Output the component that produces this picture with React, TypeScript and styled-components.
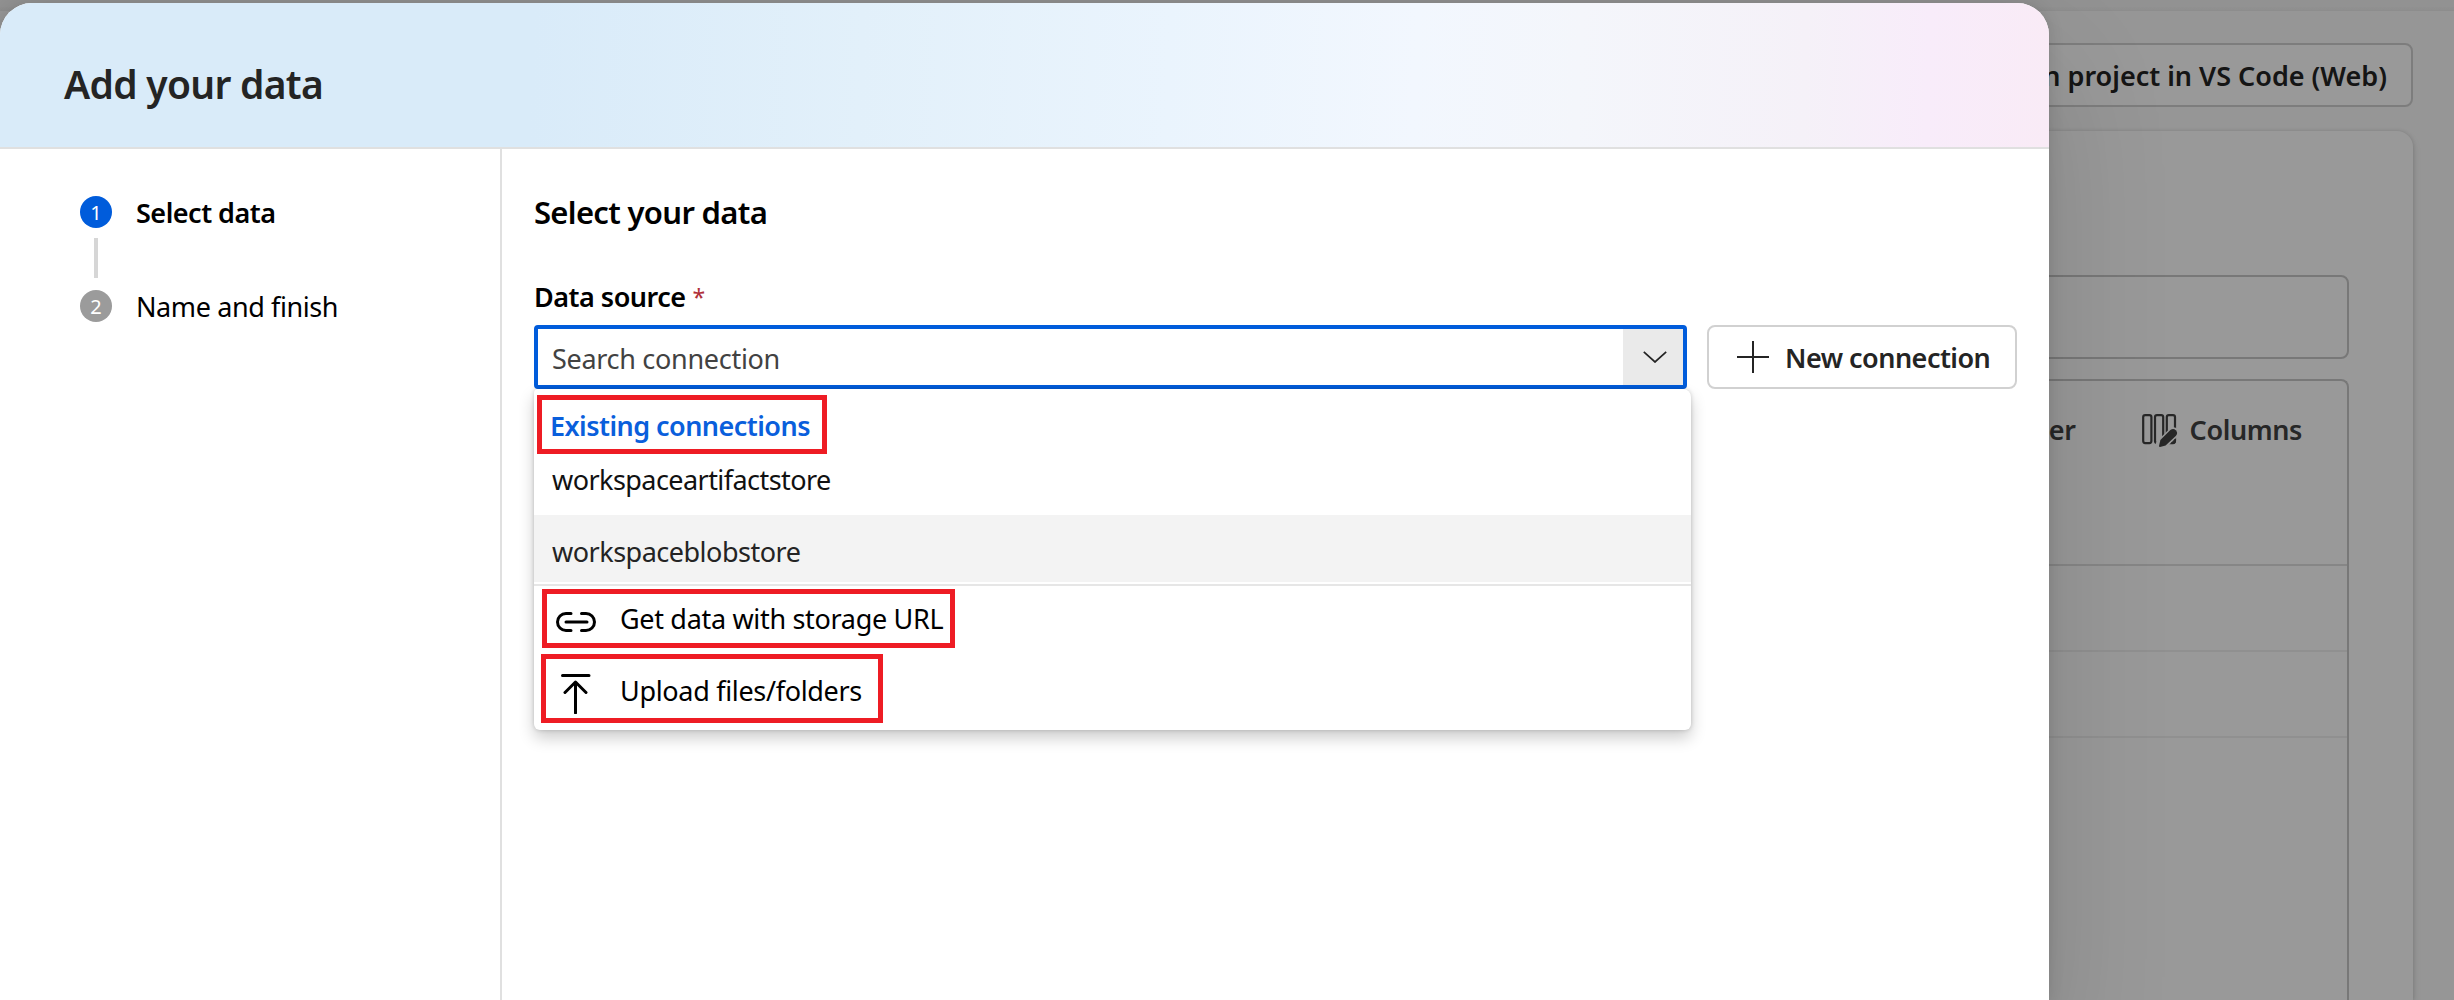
import React from 'react';
import styled, { createGlobalStyle } from 'styled-components';

const GlobalStyle = createGlobalStyle`
  *, *::before, *::after { box-sizing: border-box; }
  body {
    margin: 0;
    background: #fafafa;
    color: #000;
    font-family: "Noto Sans", "Open Sans", sans-serif;
    font-size: 27px;
  }
`;

const Screen = styled.div`
  position: relative;
  width: 2454px;
  height: 1000px;
  overflow: hidden;
`;

const Label = styled.span<{ $spacing?: number; $strong?: boolean }>`
  padding-top: 2px;
  white-space: nowrap;
  line-height: 40px;
  letter-spacing: ${(p) => p.$spacing ?? 0}px;
  font-weight: ${(p) => (p.$strong ? 600 : 400)};
`;

/* ---------- Page behind the dialog ---------- */

const Page = styled.div`
  display: flex;
  flex-direction: column;
  height: 1000px;
  background: #fafafa;
`;

const TopBar = styled.div`
  flex: none;
  height: 11px;
  background: linear-gradient(#f3f3f3 60%, #ebebeb);
`;

const PageBody = styled.div`
  flex: 1;
  display: flex;
  flex-direction: column;
  gap: 24px;
  padding: 32px 41px 0 300px;
`;

const PageActions = styled.div`
  display: flex;
  justify-content: flex-end;
`;

const OutlineButton = styled.button`
  display: flex;
  align-items: center;
  height: 64px;
  padding: 0 24px 0 26px;
  border: 2px solid #d1d1d1;
  border-radius: 8px;
  background: #fff;
  color: #242424;
  font: inherit;
`;

const PageCard = styled.div`
  flex: 1;
  display: flex;
  flex-direction: column;
  gap: 20px;
  padding: 144px 64px 0;
  border-radius: 16px 16px 0 0;
  background: #fff;
  box-shadow: 0 0 4px rgba(0, 0, 0, 0.12), 0 4px 8px rgba(0, 0, 0, 0.14);
`;

const FilterBox = styled.div`
  flex: none;
  height: 84px;
  border: 2px solid #c8c8c8;
  border-radius: 8px;
`;

const Table = styled.div`
  flex: 1;
  border: 2px solid #c8c8c8;
  border-bottom: 0;
  border-radius: 8px 8px 0 0;
`;

const TableTools = styled.div`
  display: flex;
  align-items: center;
  justify-content: flex-end;
  gap: 66px;
  height: 97px;
  padding-right: 45px;
  color: #424242;
`;

const Tool = styled.div`
  display: flex;
  align-items: center;
  gap: 12px;

  svg { margin-top: 3px; }
  ${Label} { padding-top: 1px; }
`;

const TableRow = styled.div<{ $head?: boolean }>`
  height: ${(p) => (p.$head ? 88 : 86)}px;
  border-bottom: 2px solid ${(p) => (p.$head ? '#e0e0e0' : '#f0f0f0')};
`;

const Overlay = styled.div`
  position: absolute;
  inset: 0;
  background: rgba(0, 0, 0, 0.4);
`;

/* ---------- Dialog ---------- */

const Dialog = styled.section`
  position: absolute;
  top: 3px;
  left: 0;
  width: 2049px;
  height: 1000px;
  display: flex;
  flex-direction: column;
  border-radius: 32px 32px 0 0;
  background: #fff;
  box-shadow: 0 0 16px rgba(0, 0, 0, 0.12), 0 64px 128px rgba(0, 0, 0, 0.14);
`;

const DialogHeader = styled.header`
  flex: none;
  display: flex;
  height: 146px;
  padding: 51px 0 0 64px;
  border-bottom: 2px solid #e0e0e0;
  border-radius: 32px 32px 0 0;
  background: linear-gradient(
    92deg,
    #d9ebf9 0%,
    #d9ebf9 26%,
    #e2f0fa 42%,
    #eaf4fd 57%,
    #f2f7fe 69%,
    #f4f6fb 77%,
    #f5f1f8 88%,
    #f8ecfa 94%,
    #f9ebf6 100%
  );
`;

const DialogTitle = styled.h1`
  margin: 0;
  color: #242424;
  font-size: 39px;
  font-weight: 600;
  line-height: 60px;
  letter-spacing: -0.72px;
`;

const DialogBody = styled.div`
  flex: 1;
  display: flex;
`;

const Steps = styled.nav`
  width: 502px;
  padding: 47px 0 0 80px;
  border-right: 2px solid #e0e0e0;
`;

const Step = styled.div`
  display: flex;
  align-items: center;
  gap: 24px;
  height: 32px;
`;

const StepNumber = styled.span<{ $active?: boolean }>`
  width: 32px;
  height: 32px;
  border-radius: 50%;
  background: ${(p) => (p.$active ? '#005cdb' : '#9b9b9b')};
  color: #fff;
  font-size: 20px;
  line-height: 33px;
  text-align: center;
`;

const StepLine = styled.div`
  width: 4px;
  height: 40px;
  margin: 10px 0 12px 14px;
  background: #d6d6d6;
`;

const Main = styled.main`
  flex: 1;
  padding: 41px 32px 0;
`;

const SectionTitle = styled.h2`
  margin: 0;
  font-size: 31px;
  font-weight: 600;
  line-height: 44px;
  letter-spacing: -0.68px;
`;

const FieldLabel = styled.div`
  display: flex;
  gap: 7px;
  height: 40px;
  margin: 41px 0 10px;
`;

const Required = styled.span`
  padding-top: 2px;
  color: #b0303a;
  font-size: 23px;
  line-height: 40px;
`;

const FieldRow = styled.div`
  display: flex;
  gap: 20px;
`;

const Combo = styled.div`
  position: relative;
  width: 1153px;
  height: 64px;
`;

const ComboField = styled.div`
  display: flex;
  justify-content: space-between;
  height: 64px;
  padding-left: 14px;
  border: 4px solid #005cdb;
  border-radius: 4px;
  background: #fff;
  color: #424242;

  ${Label} { line-height: 56px; }
`;

const ComboToggle = styled.div`
  display: flex;
  align-items: center;
  justify-content: center;
  width: 60px;
  padding-left: 3px;
  background: #eaeaea;
`;

const Menu = styled.div`
  position: absolute;
  top: 64px;
  left: 0;
  width: 1157px;
  height: 341px;
  padding-top: 6px;
  border-radius: 4px 8px 6px 6px;
  background: #fff;
  box-shadow: 0 0 4px rgba(0, 0, 0, 0.18), 0 8px 16px rgba(0, 0, 0, 0.2);
`;

const Marked = styled.div<{ $width: number; $height: number; $gap?: number; $left: number; $pad: number }>`
  display: flex;
  align-items: center;
  width: ${(p) => p.$width}px;
  height: ${(p) => p.$height}px;
  margin: ${(p) => p.$gap ?? 0}px 0 0 ${(p) => p.$left}px;
  padding-left: ${(p) => p.$pad}px;
  border: 5px solid #ee1c24;
`;

const GroupLabel = styled(Label)`
  color: #0a5fdc;
`;

const ActionLabel = styled(Label)<{ $drop?: number }>`
  padding-top: 1px;
  margin-top: ${(p) => p.$drop ?? 0}px;
`;

const Option = styled.div<{ $hover?: boolean }>`
  height: ${(p) => (p.$hover ? 67 : 61)}px;
  padding: ${(p) => (p.$hover ? 15 : 4)}px 0 0 18px;
  background: ${(p) => (p.$hover ? '#f3f3f3' : 'transparent')};
  color: ${(p) => (p.$hover ? '#242424' : '#111')};

  ${Label} { display: block; }
`;

const Divider = styled.div`
  height: 2px;
  margin-top: 2px;
  background: #e6e6e6;
`;

const ActionIcon = styled.svg<{ $drop: number }>`
  flex: none;
  margin: ${(p) => p.$drop}px 24px 0 0;
  fill: none;
  stroke: #000;
  stroke-width: 3;
  stroke-linecap: round;
  stroke-linejoin: round;
`;

const NewConnection = styled(OutlineButton)`
  width: 310px;
  gap: 16px;
  padding: 0 0 0 28px;
`;

const ColumnsIcon = () => (
  <svg width="36" height="34" viewBox="0 0 36 34" fill="none" stroke="#424242" strokeWidth="2.2">
    <rect x="1.2" y="1.1" width="8.2" height="28" rx="2" />
    <rect x="13" y="1.1" width="8.2" height="28" rx="2" />
    <rect x="24.8" y="1.1" width="8.2" height="28" rx="2" />
    <path d="M19 31 31.5 18.8" stroke="#fff" strokeWidth="11" strokeLinecap="round" />
    <path
      d="M17 32 18.4 26 28.4 16Q31.2 13.8 33.8 16.2 36.4 19 34 21.8L23.6 31.4 18 33Q17 33 17 32Z"
      fill="#424242"
      stroke="none"
    />
    <path d="M29 29.4 33.4 25v2.4q0 2-2 2Z" fill="#424242" strokeWidth="1" />
  </svg>
);

export default function App() {
  return (
    <Screen>
      <GlobalStyle />
      <Page>
        <TopBar />
        <PageBody>
          <PageActions>
            <OutlineButton>
              <Label $strong>Open project in VS Code (Web)</Label>
            </OutlineButton>
          </PageActions>
          <PageCard>
            <FilterBox />
            <Table>
              <TableTools>
                <Tool>
                  <Label $strong $spacing={-0.4}>Filter</Label>
                </Tool>
                <Tool>
                  <ColumnsIcon />
                  <Label $strong $spacing={-0.4}>Columns</Label>
                </Tool>
              </TableTools>
              <TableRow $head />
              <TableRow />
              <TableRow />
            </Table>
          </PageCard>
        </PageBody>
      </Page>
      <Overlay />

      <Dialog>
        <DialogHeader>
          <DialogTitle>Add your data</DialogTitle>
        </DialogHeader>
        <DialogBody>
          <Steps>
            <Step>
              <StepNumber $active>1</StepNumber>
              <Label $strong $spacing={-0.5}>Select data</Label>
            </Step>
            <StepLine />
            <Step>
              <StepNumber>2</StepNumber>
              <Label $spacing={-0.4}>Name and finish</Label>
            </Step>
          </Steps>
          <Main>
            <SectionTitle>Select your data</SectionTitle>
            <FieldLabel>
              <Label $strong $spacing={-0.5}>Data source</Label>
              <Required>*</Required>
            </FieldLabel>
            <FieldRow>
              <Combo>
                <ComboField>
                  <Label $spacing={-0.3}>Search connection</Label>
                  <ComboToggle>
                    <svg width="24" height="12" viewBox="0 0 24 12" fill="none" stroke="#242424" strokeWidth="1.7">
                      <path d="M.8.8 12 11 23.2.8" />
                    </svg>
                  </ComboToggle>
                </ComboField>
                <Menu>
                  <Marked $width={290} $height={59} $left={3} $pad={8}>
                    <GroupLabel $strong $spacing={-0.54}>Existing connections</GroupLabel>
                  </Marked>
                  <Option>
                    <Label $spacing={-0.56}>workspaceartifactstore</Label>
                  </Option>
                  <Option $hover>
                    <Label $spacing={-0.5}>workspaceblobstore</Label>
                  </Option>
                  <Divider />
                  <Marked $width={413} $height={59} $gap={3} $left={8} $pad={9}>
                    <ActionIcon $drop={7} width="40" height="20" viewBox="0 0 40 20">
                      <path d="M15 1.5h-5a8.5 8.5 0 0 0 0 17h5M25.5 1.5H30a8.5 8.5 0 0 1 0 17h-4.5M10 10h21" />
                    </ActionIcon>
                    <ActionLabel $spacing={-0.32}>Get data with storage URL</ActionLabel>
                  </Marked>
                  <Marked $width={342} $height={69} $gap={6} $left={7} $pad={10}>
                    <ActionIcon $drop={11} width="40" height="40" viewBox="0 0 40 40">
                      <path d="M6.5 1.5h26.5M19.5 8v31M9 18.5 19.5 8 30 18.5" />
                    </ActionIcon>
                    <ActionLabel $drop={4} $spacing={-0.32}>Upload files/folders</ActionLabel>
                  </Marked>
                </Menu>
              </Combo>
              <NewConnection>
                <svg width="32" height="32" viewBox="0 0 32 32" stroke="#242424" strokeWidth="2">
                  <path d="M16 0v32M0 16h32" />
                </svg>
                <Label $strong $spacing={-0.52}>New connection</Label>
              </NewConnection>
            </FieldRow>
          </Main>
        </DialogBody>
      </Dialog>
    </Screen>
  );
}
